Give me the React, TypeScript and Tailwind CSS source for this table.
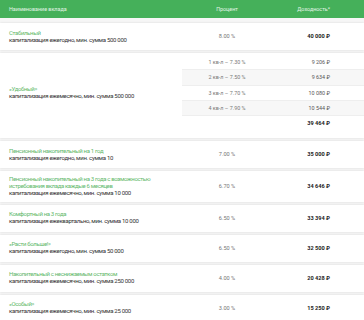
import React from 'react';

type Deposit = {
  name: string;
  terms: string;
  rate: string;
  income: string;
};

const deposits: Deposit[] = [
  { name: 'Пенсионный накопительный на 1 год', terms: 'капитализация ежегодно, мин. сумма 10', rate: '7.00 %', income: '35 000 ₽' },
  {
    name: 'Пенсионный накопительный на 3 года с возможностью истребования вклада каждые 6 месяцев',
    terms: 'капитализация ежемесячно, мин. сумма 10 000',
    rate: '6.70 %',
    income: '34 646 ₽',
  },
  { name: 'Комфортный на 3 года', terms: 'капитализация ежеквартально, мин. сумма 10 000', rate: '6.50 %', income: '33 394 ₽' },
  { name: '«Расти больше!»', terms: 'капитализация ежегодно, мин. сумма 50 000', rate: '6.50 %', income: '32 500 ₽' },
  { name: 'Накопительный с неснижаемым остатком', terms: 'капитализация ежемесячно, мин. сумма 250 000', rate: '4.00 %', income: '20 428 ₽' },
  { name: '«Особый»', terms: 'капитализация ежемесячно, мин. сумма 25 000', rate: '3.00 %', income: '15 250 ₽' },
];

const quarters = [
  { rate: '1 кв-л – 7.30 %', income: '9 206 ₽' },
  { rate: '2 кв-л – 7.50 %', income: '9 634 ₽' },
  { rate: '3 кв-л – 7.70 %', income: '10 080 ₽' },
  { rate: '4 кв-л – 7.90 %', income: '10 544 ₽' },
];

function Name({ name, terms }: { name: string; terms: string }) {
  return (
    <div className="w-[182px] shrink-0 pl-[9px] pr-[22px]">
      <div className="text-[6px] leading-[7px] tracking-[-0.35px] text-[#62b86a]">{name}</div>
      <div className="text-[6px] leading-[8.5px] tracking-[-0.3px] text-[#333]">{terms}</div>
    </div>
  );
}

function Card({ d }: { d: Deposit }) {
  return (
    <div className="flex min-h-[27px] items-center bg-white py-[4px] shadow-[0_0_2px_rgba(0,0,0,0.12)]">
      <Name name={d.name} terms={d.terms} />
      <div className="w-[90px] shrink-0 text-center text-[5.6px] text-[#777]">{d.rate}</div>
      <div className="w-[58px] shrink-0 text-right text-[5.6px] font-bold text-[#222]">{d.income}</div>
    </div>
  );
}

export default function App() {
  return (
    <div className="w-[364px] h-[320px] overflow-hidden bg-[#f6f6f6] font-['Roboto',sans-serif]">
      <div className="flex h-[18px] items-center bg-[#45b05a] text-[5.4px] text-white/85">
        <div className="w-[182px] pl-[9px]">Наименование вклада</div>
        <div className="w-[90px] text-center">Процент</div>
        <div className="w-[58px] text-right">Доходность*</div>
      </div>

      <div className="flex flex-col gap-[3px] pt-[5px]">
        <div className="flex min-h-[27px] items-center bg-white py-[4px] shadow-[0_0_2px_rgba(0,0,0,0.12)]">
          <Name name="Стабильный" terms="капитализация ежегодно, мин. сумма 500 000" />
          <div className="w-[90px] shrink-0 text-center text-[5.6px] text-[#777]">8.00 %</div>
          <div className="w-[58px] shrink-0 text-right text-[5.6px] font-bold text-[#222]">40 000 ₽</div>
        </div>

        <div className="flex items-center bg-white pt-[2px] pb-[7px] shadow-[0_0_2px_rgba(0,0,0,0.12)]">
          <Name name="«Удобный»" terms="капитализация ежемесячно, мин. сумма 500 000" />
          <div className="flex flex-1 flex-col">
            {quarters.map((q, i) => (
              <div
                key={q.rate}
                className={`flex h-[15.25px] items-center border-b border-[#eee] text-[5.4px] ${i % 2 === 1 ? 'bg-[#f7f7f7]' : ''}`}
              >
                <div className="w-[90px] text-center text-[#777]">{q.rate}</div>
                <div className="w-[58px] text-right text-[#555]">{q.income}</div>
              </div>
            ))}
            <div className="flex h-[15px] items-center text-[5.6px]">
              <div className="w-[90px]" />
              <div className="w-[58px] text-right font-bold text-[#222]">39 464 ₽</div>
            </div>
          </div>
        </div>

        {deposits.map((d) => (
          <Card key={d.name} d={d} />
        ))}
      </div>
    </div>
  );
}
